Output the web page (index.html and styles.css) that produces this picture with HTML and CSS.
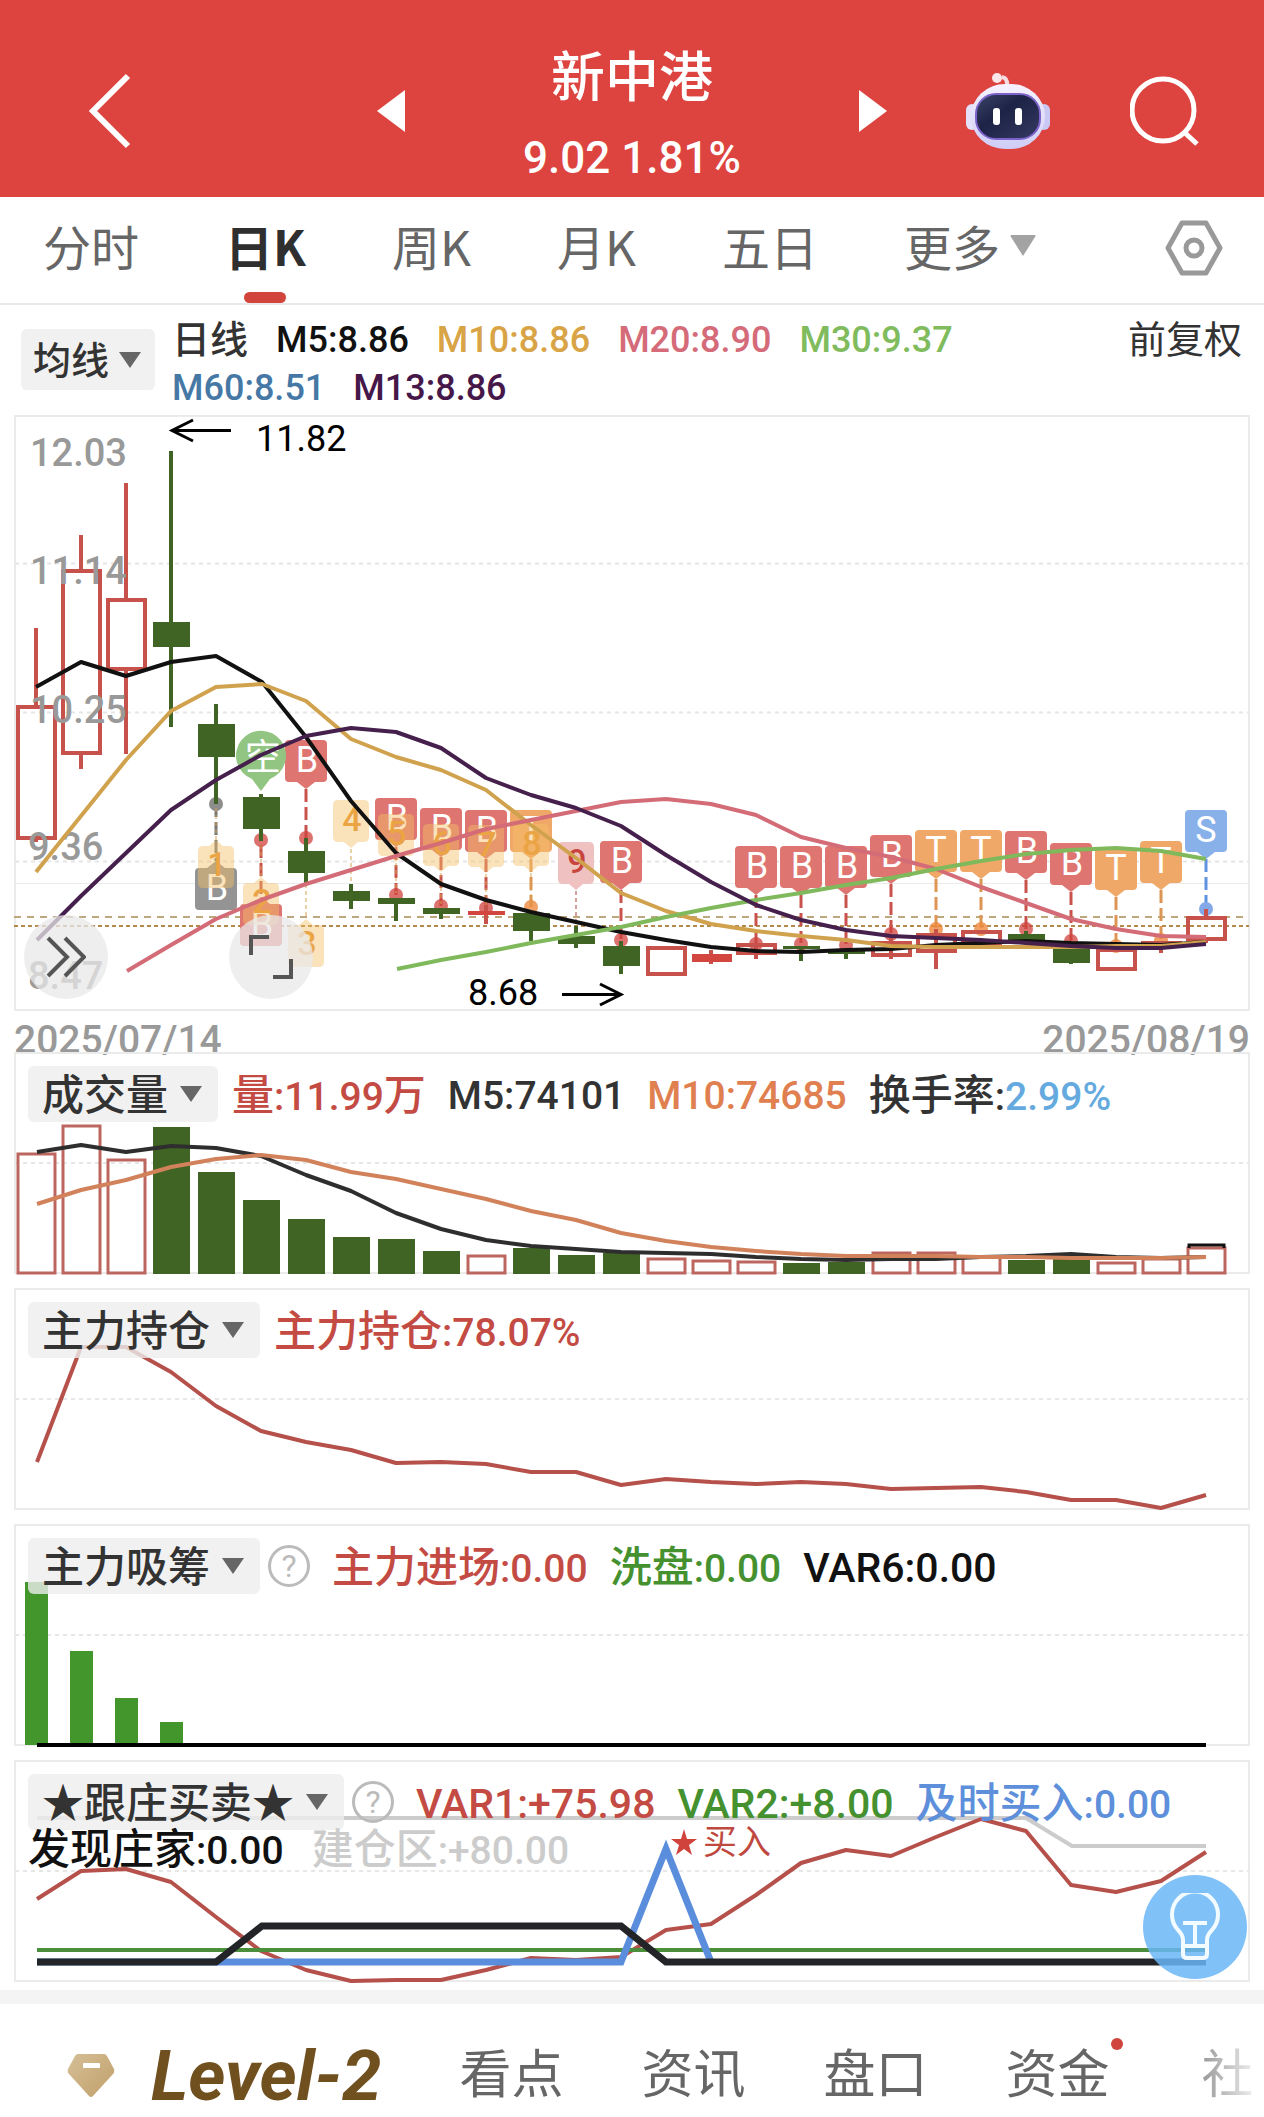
FILE: index.html
```html
<!DOCTYPE html>
<html lang="zh-CN">
<head>
<meta charset="utf-8">
<meta name="viewport" content="width=device-width, initial-scale=1">
<title>新中港 日K</title>
<link rel="stylesheet" href="styles.css">
</head>
<body>
<header class="topbar">
  <button class="icon-btn back" aria-label="返回"><svg width="44" height="76" viewBox="0 0 44 76"><path d="M40 3L5 38L40 73" fill="none" stroke="#fff" stroke-width="6"/></svg></button>
  <div class="stock">
    <button class="icon-btn" aria-label="上一只"><svg width="28" height="42" viewBox="0 0 28 42"><path d="M28 0V42L0 21Z" fill="#fff"/></svg></button>
    <div class="stock-info">
      <h1>新中港</h1>
      <p>9.02 1.81%</p>
    </div>
    <button class="icon-btn" aria-label="下一只"><svg width="28" height="42" viewBox="0 0 28 42"><path d="M0 0V42L28 21Z" fill="#fff"/></svg></button>
  </div>
  <div class="tools">
    <button class="icon-btn" aria-label="智能助手"><svg width="84" height="78" viewBox="0 0 84 78">
      <defs>
        <linearGradient id="shell" x1="0" y1="0" x2="0" y2="1"><stop offset="0" stop-color="#f6f2ff"/><stop offset="1" stop-color="#cfcdf6"/></linearGradient>
        <linearGradient id="visor" x1="0" y1="0" x2="1" y2="1"><stop offset="0" stop-color="#3c4468"/><stop offset=".4" stop-color="#1c2346"/><stop offset="1" stop-color="#353a62"/></linearGradient>
      </defs>
      <path d="M41 14Q42 6 36 5" fill="none" stroke="#f6dce2" stroke-width="4"/>
      <ellipse cx="31" cy="6" rx="5" ry="5" fill="#fbe7ea"/>
      <rect x="0" y="32" width="12" height="26" rx="6" fill="#e4e0fb"/>
      <rect x="72" y="32" width="12" height="26" rx="6" fill="#c9c8f4"/>
      <rect x="5" y="12" width="74" height="65" rx="34" fill="url(#shell)"/>
      <rect x="10" y="22" width="64" height="45" rx="20" fill="url(#visor)" stroke="#7b63c9" stroke-width="2"/>
      <rect x="27" y="36" width="7" height="17" rx="3" fill="#fff"/>
      <rect x="49" y="36" width="7" height="17" rx="3" fill="#fff"/>
    </svg></button>
    <button class="icon-btn" aria-label="搜索"><svg width="70" height="70" viewBox="0 0 70 70" fill="none" stroke="#fff" stroke-width="5"><circle cx="33" cy="34" r="31"/><path d="M54 56L67 68"/></svg></button>
  </div>
</header>

<nav class="periods">
  <a href="#">分时</a>
  <a href="#" class="active">日K</a>
  <a href="#">周K</a>
  <a href="#">月K</a>
  <a href="#">五日</a>
  <a href="#" class="more">更多<svg width="26" height="21" viewBox="0 0 26 21"><path d="M1 0H25Q26 1 25 2L13 21L1 2Q0 1 1 0Z" fill="#a3a3a3"/></svg></a>
  <button class="icon-btn settings" aria-label="设置"><svg width="58" height="56" viewBox="0 0 58 56" fill="none" stroke="#999" stroke-width="5" stroke-linejoin="round"><path d="M17 3H41L55 28L41 53H17L3 28Z"/><circle cx="29" cy="28" r="8"/></svg></button>
</nav>

<section class="legend">
  <button class="picker picker-small">均线<svg width="22" height="16" viewBox="0 0 22 16"><path d="M0 0H22L11 16Z" fill="#666"/></svg></button>
  <div class="ma-rows">
    <div class="ma-row"><span class="cn">日线</span><span class="c-m5">M5:8.86</span><span class="c-m10">M10:8.86</span><span class="c-m20">M20:8.90</span><span class="c-m30">M30:9.37</span></div>
    <div class="ma-row"><span class="c-m60">M60:8.51</span><span class="c-m13">M13:8.86</span></div>
  </div>
  <button class="adjust">前复权</button>
</section>

<main class="charts">
  <section class="panel price">
    <svg class="plot" viewBox="14 415 1236 596" role="img" aria-label="日K线图">
      <defs>
        <path id="pin" d="M-17 0H17Q21 0 21 4V38Q21 42 17 42H9L0 49L-9 42H-17Q-21 42 -21 38V4Q-21 0 -17 0Z"/>
        <path id="pin-up" d="M0 -7L9 0H17Q21 0 21 4V38Q21 42 17 42H-17Q-21 42 -21 38V4Q-21 0 -17 0H-9Z"/>
        <path id="tag" d="M-13 0H13Q18 0 18 5V37Q18 42 13 42H7L0 48L-7 42H-13Q-18 42 -18 37V5Q-18 0 -13 0Z"/>
        <path id="tag-up" d="M0 -6L7 0H13Q18 0 18 5V37Q18 42 13 42H-13Q-18 42 -18 37V5Q-18 0 -13 0H-7Z"/>
      </defs>
      <rect class="frame" x="15" y="416" width="1234" height="594"/>
      <path class="grid" d="M15 563.5H1249M15 712.5H1249M15 861.5H1249"/>
      <path d="M15 883.5H1249" stroke="#ebebeb"/>
      <path d="M14 917H1249" stroke="#bda77c" stroke-width="2" stroke-dasharray="7 6"/>
      <path d="M14 926H1249" stroke="#b5884e" stroke-width="2" stroke-dasharray="4 3"/>

      <g fill="#de7570">
        <use href="#pin-up" x="261" y="904"/>
        <use href="#pin" x="306" y="740"/><use href="#pin" x="396" y="798"/><use href="#pin" x="441" y="808"/><use href="#pin" x="486" y="810"/>
        <use href="#pin" x="621" y="841"/><use href="#pin" x="756" y="846"/><use href="#pin" x="801" y="846"/><use href="#pin" x="846" y="846"/>
        <use href="#pin" x="891" y="835"/><use href="#pin" x="1026" y="831"/><use href="#pin" x="1071" y="843"/>
      </g>
      <g fill="#f0a868">
        <use href="#pin" x="531" y="810"/><use href="#pin" x="936" y="830"/><use href="#pin" x="981" y="830"/><use href="#pin" x="1116" y="848"/><use href="#pin" x="1161" y="841"/>
      </g>
      <use href="#pin" x="1206" y="810" fill="#88b1ea"/>
      <use href="#pin-up" x="216" y="868" fill="#949494"/>
      <path d="M261 791L252 779A25 25 0 1 1 270 779Z" fill="#92c581"/>
      <g class="pin-text">
        <text x="217" y="900">B</text><text x="262" y="937">B</text><text x="307" y="772">B</text><text x="397" y="830">B</text><text x="442" y="840">B</text><text x="487" y="842">B</text><text x="531" y="842">T</text>
        <text x="622" y="873">B</text><text x="757" y="878">B</text><text x="802" y="878">B</text><text x="847" y="878">B</text><text x="892" y="867">B</text><text x="936" y="862">T</text><text x="981" y="862">T</text>
        <text x="1027" y="863">B</text><text x="1072" y="875">B</text><text x="1116" y="880">T</text><text x="1161" y="873">T</text><text x="1206" y="842">S</text>
        <text x="263" y="770">空</text>
      </g>
      <g class="stem">
        <path d="M306 789V838M396 847V895M441 857V906M486 859V908M261 845V897M621 890V940M756 895V943M801 895V943M846 895V945M891 884V934M1026 880V929M1071 892V941" stroke="#c9534c"/>
        <path d="M531 859V907M936 879V929M981 879V929M1116 897V944M1161 890V940" stroke="#dd9555"/>
        <path d="M1206 859V909" stroke="#5f93e0"/>
        <path d="M216 804V861" stroke="#777"/>
      </g>
      <g fill="#d0423c" fill-opacity=".75">
        <circle cx="306" cy="838" r="7"/><circle cx="261" cy="840" r="7"/><circle cx="396" cy="895" r="7"/><circle cx="441" cy="906" r="7"/><circle cx="486" cy="908" r="7"/><circle cx="621" cy="940" r="7"/><circle cx="756" cy="944" r="7"/><circle cx="801" cy="944" r="7"/><circle cx="846" cy="945" r="7"/><circle cx="891" cy="934" r="7"/><circle cx="1026" cy="929" r="7"/><circle cx="1071" cy="941" r="7"/>
      </g>
      <g fill="#ec8a3c" fill-opacity=".8">
        <circle cx="531" cy="907" r="7"/><circle cx="936" cy="929" r="7"/><circle cx="981" cy="929" r="7"/><circle cx="1116" cy="946" r="7"/><circle cx="1161" cy="940" r="7"/>
      </g>
      <circle cx="1206" cy="909" r="7" fill="#84a9e8"/><circle cx="216" cy="804" r="7" fill="#8d8d8d"/>

      <g fill="#f5bf67" fill-opacity=".45">
        <use href="#tag-up" x="216" y="846"/><use href="#tag-up" x="261" y="883"/><use href="#tag-up" x="306" y="925"/>
        <use href="#tag" x="351" y="800"/><use href="#tag" x="396" y="814"/><use href="#tag" x="441" y="824"/><use href="#tag" x="486" y="825"/><use href="#tag" x="531" y="824"/>
      </g>
      <use href="#tag" x="576" y="842" fill="#efc1c1"/>
      <g class="tag-text">
        <text x="217" y="876">1</text><text x="262" y="913">2</text><text x="307" y="955">3</text><text x="352" y="831">4</text><text x="397" y="845">5</text><text x="442" y="855">6</text><text x="487" y="856">7</text><text x="532" y="855">8</text>
        <text x="577" y="873" fill="#c8443c">9</text>
      </g>
      <path d="M216 808V840M261 845V877M306 884V918M351 849V884M396 863V893M441 873V904M486 874V905M531 873V905" stroke="#d3a24f" stroke-dasharray="4 3"/>
      <path d="M576 891V926" stroke="#ab423b" stroke-dasharray="4 3"/>

      <g class="candle-down">
        <path d="M171 451V727M216 704V804M261 794V841M306 838V883M351 884V909M396 898V921M441 908V919M531 913V941M576 926V948M621 941V974M801 946V961M846 951V959M1026 931V940M1071 948V964" stroke-width="4"/>
        <path d="M153 622h37v25h-37zM198 724h37v33h-37zM243 797h37v32h-37zM288 851h37v22h-37zM333 891h37v10h-37zM378 898h37v6h-37zM423 908h37v6h-37zM513 913h37v18h-37zM558 936h37v8h-37zM603 946h37v20h-37zM783 946h37v3h-37zM828 951h37v3h-37zM1008 934h37v8h-37zM1053 946h37v17h-37z" stroke="none"/>
      </g>
      <g class="candle-up">
        <path d="M36 628V707M36 838V842M81 535V571M81 753V769M126 483V600M126 669V754M486 905V924M756 945V959M891 934V959M936 929V969M1161 942V953M1206 909V918M1206 939V943M711 950V964"/>
        <path d="M18 707h37v131h-37zM63 571h37v182h-37zM108 600h37v69h-37zM648 948h37v26h-37zM738 945h37v8h-37zM873 943h37v12h-37zM918 935h37v16h-37zM963 932h37v11h-37zM1098 950h37v19h-37zM1143 943h37v3h-37zM1188 918h37v21h-37z"/>
        <path d="M468 911h37v4h-37zM692 954h40v8h-40z" fill="#d2463f" stroke="none"/>
      </g>

      <g class="axis">
        <text x="30" y="466">12.03</text><text x="30" y="584">11.14</text><text x="30" y="723">10.25</text><text x="28" y="860">9.36</text><text x="28" y="989">8.47</text>
      </g>

      <g class="ma">
        <polyline stroke="#111" points="36,687 81,662 126,676 171,662 216,656 262,682 306,737 351,801 396,853 441,884 486,900 531,912 576,922 621,932 666,940 711,947 756,951 801,952 846,950 891,949 936,945 981,943 1026,941 1071,943 1116,944 1161,945 1206,942"/>
        <polyline stroke="#d0a24e" points="36,872 81,816 126,760 171,711 216,687 262,684 306,701 351,739 396,757 441,770 486,790 531,825 576,858 621,893 666,911 711,924 756,931 801,936 846,940 891,946 936,947 981,947 1026,947 1071,947 1116,946 1161,946 1206,942"/>
        <polyline stroke="#d36c77" points="127,971 171,945 216,919 261,900 306,884 351,870 396,856 441,843 486,829 531,820 576,811 621,802 666,799 711,804 756,815 801,837 846,848 891,857 936,869 981,887 1026,903 1071,919 1116,929 1161,936 1206,937"/>
        <polyline stroke="#7fb95c" points="397,969 441,960 486,952 531,943 576,935 621,927 666,917 711,908 756,900 801,893 846,885 891,878 936,869 981,861 1026,854 1071,850 1116,848 1161,851 1206,859"/>
        <polyline stroke="#46204c" points="37,940 81,896 126,853 171,810 216,780 261,755 306,736 351,728 396,732 441,748 486,778 531,795 576,808 621,826 666,855 711,882 756,905 801,920 846,930 891,936 936,938 981,940 1026,943 1071,946 1116,948 1161,948 1206,944"/>
      </g>

      <g class="extreme">
        <path d="M231 430.500H172M193 420L172 430.500L193 441M562 994.500H621M600 984L621 994.500L600 1005"/>
        <text x="256" y="451">11.82</text><text x="468" y="1005">8.68</text>
      </g>
    </svg>
    <div class="floaters">
      <button class="round" aria-label="展开"><svg width="40" height="42" viewBox="0 0 40 42" fill="none" stroke="#555" stroke-width="4"><path d="M2 2L21 21L2 40M19 2L38 21L19 40"/></svg></button>
      <button class="round" aria-label="全屏"><svg width="44" height="44" viewBox="0 0 44 44" fill="none" stroke="#555" stroke-width="4"><path d="M2 20V2H20M42 24V42H24"/></svg></button>
    </div>
  </section>

  <div class="dates"><time>2025/07/14</time><time>2025/08/19</time></div>

  <section class="panel">
    <svg class="plot" viewBox="14 1052 1236 222" role="img" aria-label="成交量">
      <rect class="frame" x="15" y="1053" width="1234" height="220"/>
      <path class="grid" d="M15 1163H1249"/>
      <path fill="#406423" d="M153 1127h37v147h-37zM198 1172h37v102h-37zM243 1200h37v74h-37zM288 1219h37v55h-37zM333 1237h37v37h-37zM378 1239h37v35h-37zM423 1251h37v23h-37zM513 1248h37v26h-37zM558 1255h37v19h-37zM603 1253h37v21h-37zM783 1263h37v11h-37zM828 1262h37v12h-37zM1008 1260h37v14h-37zM1053 1259h37v15h-37z"/>
      <path fill="none" stroke="#bd6660" stroke-width="3" d="M18 1154h37v119h-37zM63 1126h37v147h-37zM108 1160h37v113h-37zM468 1256h37v17h-37zM648 1259h37v14h-37zM693 1261h37v12h-37zM738 1262h37v11h-37zM873 1253h37v20h-37zM918 1253h37v20h-37zM963 1257h37v16h-37zM1098 1263h37v10h-37zM1143 1259h37v14h-37zM1188 1248h37v25h-37z"/>
      <path d="M1189 1248V1245H1224V1248" fill="none" stroke="#111" stroke-width="3"/>
      <g class="ma">
        <polyline stroke="#2e2e2e" points="37,1152 81,1145 126,1152 171,1146 216,1148 261,1156 306,1175 351,1191 396,1213 441,1229 486,1240 531,1246 576,1249 621,1252 666,1253 711,1254 756,1257 801,1259 846,1260 891,1259 936,1259 981,1257 1026,1256 1071,1254 1116,1257 1161,1258 1206,1257"/>
        <polyline stroke="#d2825a" points="37,1204 81,1190 126,1180 171,1167 216,1159 261,1155 306,1160 351,1172 396,1179 441,1189 486,1199 531,1211 576,1220 621,1233 666,1241 711,1247 756,1251 801,1254 846,1256 891,1256 936,1256 981,1257 1026,1257 1071,1258 1116,1258 1161,1258 1206,1257"/>
      </g>
    </svg>
    <div class="readout">
      <div class="row"><button class="picker">成交量<svg width="22" height="16" viewBox="0 0 22 16"><path d="M0 0H22L11 16Z" fill="#666"/></svg></button>
      <span class="c-red"><b>量</b>:11.99<b>万</b></span><span class="c-dark">M5:74101</span><span class="c-orange">M10:74685</span><span class="c-dark"><b>换手率</b>:<span class="c-sky">2.99%</span></span></div>
    </div>
  </section>

  <section class="panel">
    <svg class="plot" viewBox="14 1288 1236 222" role="img" aria-label="主力持仓">
      <rect class="frame" x="15" y="1289" width="1234" height="220"/>
      <path class="grid" d="M15 1399H1249"/>
      <g class="ma"><polyline stroke="#b5504a" points="37,1462 81,1347 126,1347 171,1372 216,1406 261,1431 306,1442 351,1450 396,1463 441,1462 486,1464 531,1472 576,1472 621,1485 666,1479 711,1482 756,1484 801,1482 846,1484 891,1489 936,1488 981,1487 1026,1492 1071,1500 1116,1500 1161,1508 1206,1495"/></g>
    </svg>
    <div class="readout">
      <div class="row"><button class="picker">主力持仓<svg width="22" height="16" viewBox="0 0 22 16"><path d="M0 0H22L11 16Z" fill="#666"/></svg></button>
      <span class="c-red"><b>主力持仓</b>:78.07%</span></div>
    </div>
  </section>

  <section class="panel">
    <svg class="plot" viewBox="14 1524 1236 222" role="img" aria-label="主力吸筹">
      <rect class="frame" x="15" y="1525" width="1234" height="220"/>
      <path class="grid" d="M15 1635H1249"/>
      <path fill="#43962b" d="M25 1582h23v163h-23zM70 1651h23v94h-23zM115 1698h23v47h-23zM160 1722h23v23h-23z"/>
      <path d="M37 1745H1206" stroke="#000" stroke-width="4"/>
    </svg>
    <div class="readout">
      <div class="row"><button class="picker">主力吸筹<svg width="22" height="16" viewBox="0 0 22 16"><path d="M0 0H22L11 16Z" fill="#666"/></svg></button>
      <button class="help" aria-label="说明">?</button>
      <span class="c-red"><b>主力进场</b>:0.00</span><span class="c-green"><b>洗盘</b>:0.00</span><span class="c-black var">VAR6:0.00</span></div>
    </div>
  </section>

  <section class="panel">
    <svg class="plot" viewBox="14 1760 1236 222" role="img" aria-label="跟庄买卖">
      <rect class="frame" x="15" y="1761" width="1234" height="220"/>
      <path class="grid" d="M15 1871H1249"/>
      <g class="ma">
        <polyline stroke="#ccc" points="37,1818 1026,1818 1072,1846 1206,1846"/>
        <polyline stroke="#b5504a" points="37,1899 81,1871 126,1869 171,1882 216,1917 261,1951 306,1970 351,1981 396,1980 441,1980 486,1970 531,1958 576,1960 621,1957 666,1930 711,1924 756,1895 801,1863 846,1850 891,1856 936,1837 981,1819 1026,1831 1071,1885 1116,1892 1161,1881 1206,1852"/>
        <path stroke="#4b8f3c" d="M37 1950H1206"/>
      </g>
      <g fill="none" stroke-width="7">
        <polyline stroke="#5b8ddd" points="37,1962 621,1962 666,1849 711,1962"/>
        <polyline stroke="#232428" points="37,1962 216,1962 262,1926 621,1926 666,1962 1206,1962"/>
      </g>
      <path d="M684 1829l3 10h10l-8 6 3 10-8-6-8 6 3-10-8-6h10z" fill="#d0433c"/>
      <text class="signal" x="703" y="1854">买入</text>
    </svg>
    <div class="readout">
      <div class="row"><button class="picker">★跟庄买卖★<svg width="22" height="16" viewBox="0 0 22 16"><path d="M0 0H22L11 16Z" fill="#666"/></svg></button>
      <button class="help" aria-label="说明">?</button>
      <span class="c-red var">VAR1:+75.98</span><span class="c-green var">VAR2:+8.00</span><span class="c-blue"><b>及时买入</b>:0.00</span></div>
      <div class="row second"><span class="c-black"><b>发现庄家</b>:0.00</span><span class="c-pale"><b>建仓区</b>:+80.00</span></div>
    </div>
    <button class="tip" aria-label="提示"><svg width="50" height="68" viewBox="0 0 50 68" fill="none" stroke="#f2fbff" stroke-width="4"><path d="M13 47Q13 42 8 37A23 23 0 1 1 42 37Q37 42 37 47V61Q37 65 33 65H17Q13 65 13 61ZM13 53H37M13 30H37M25 30V53"/></svg></button>
  </section>
</main>

<nav class="bottom">
  <a href="#" class="level"><svg width="48" height="43" viewBox="0 0 48 43"><defs><linearGradient id="gem" x1="0" y1="0" x2="1" y2="1"><stop offset="0" stop-color="#d5bf97"/><stop offset="1" stop-color="#c19f69"/></linearGradient></defs><path d="M11 0H37Q39 0 40 2L47 15Q48 18 46 20L26 42Q24 44 22 42L2 20Q0 18 1 15L8 2Q9 0 11 0Z" fill="url(#gem)"/><rect x="16" y="9" width="17" height="5" rx="1" fill="#fff"/></svg>Level-2</a>
  <a href="#">看点</a>
  <a href="#">资讯</a>
  <a href="#">盘口</a>
  <a href="#" class="has-dot">资金</a>
  <a href="#" class="fade">社</a>
</nav>
</body>
</html>
```
FILE: styles.css
```css
* {
  box-sizing: border-box;
}

body {
  margin: 0;
  background: #fff;
  color: #333;
  font-family: Roboto, "Noto Sans CJK SC", sans-serif;
  overflow-x: hidden;
}

button {
  margin: 0;
  padding: 0;
  border: 0;
  background: none;
  color: inherit;
  font: inherit;
}

a {
  color: inherit;
  text-decoration: none;
}

svg {
  display: block;
}

b {
  font-weight: 500;
  font-size: 42px;
}

/* title bar */
.topbar {
  display: grid;
  grid-template-columns: 1fr auto 1fr;
  align-items: center;
  height: 197px;
  padding: 25px 64px 0 88px;
  background: #dd4440;
  color: #fff;
}

.stock {
  display: flex;
  align-items: center;
  justify-content: space-between;
  width: 510px;
  margin-right: 24px;
}

.stock-info {
  padding-top: 14px;
  text-align: center;
  font-weight: 500;
}

.stock-info h1 {
  margin: 0;
  font-size: 54px;
  line-height: 80px;
  font-weight: 500;
}

.stock-info p {
  margin: 0;
  font-size: 44px;
  line-height: 78px;
}

.tools {
  display: flex;
  align-items: center;
  justify-content: flex-end;
  gap: 80px;
}

/* period tabs */
.periods {
  display: flex;
  align-items: center;
  gap: 86px;
  height: 108px;
  padding: 0 41px 4px 43px;
  border-bottom: 2px solid #e9e9e9;
  color: #666;
  font-family: "Noto Sans CJK SC", sans-serif;
  font-size: 48px;
  line-height: 90px;
}

.periods a {
  padding-bottom: 6px;
}

.active {
  position: relative;
  color: #2f2f2f;
  font-weight: 700;
}

.active::after {
  content: "";
  position: absolute;
  left: 50%;
  bottom: -7px;
  width: 42px;
  height: 11px;
  margin-left: -21px;
  border-radius: 6px;
  background: #d2453c;
}

.more {
  display: flex;
  align-items: center;
  gap: 10px;
}

.settings {
  margin-left: auto;
}

/* moving average legend */
.legend {
  display: flex;
  align-items: flex-start;
  height: 110px;
  padding: 11px 22px 0 21px;
  font-size: 36px;
}

.picker {
  display: flex;
  align-items: center;
  gap: 12px;
  height: 56px;
  padding: 3px 16px 0 14px;
  border-radius: 6px;
  background: rgba(238, 238, 238, 0.8);
  color: #333;
  font-size: 42px;
  font-weight: 500;
  line-height: 53px;
}

.picker svg {
  margin-top: -3px;
}

.picker-small {
  gap: 10px;
  height: 61px;
  margin-top: 13px;
  padding: 3px 14px 0 12px;
  font-size: 38px;
}

.ma-rows {
  flex: 1;
  padding-left: 17px;
  font-weight: 500;
}

.ma-row {
  display: flex;
  gap: 28px;
  line-height: 48px;
}

.cn,
.adjust {
  font-size: 38px;
}

.adjust {
  line-height: 48px;
}

/* charts */
.charts {
  padding: 0 14px 8px;
  border-bottom: 14px solid #f4f4f4;
}

.panel {
  display: grid;
  position: relative;
  margin-bottom: 14px;
}

.panel:last-child,
.price {
  margin-bottom: 0;
}

.plot {
  grid-area: 1 / 1;
  width: 100%;
  height: auto;
  overflow: visible;
}

.frame {
  fill: none;
  stroke: #ebebeb;
  stroke-width: 2;
}

.grid {
  stroke: #e6e6e6;
  stroke-width: 2;
  stroke-dasharray: 4 4;
}

.ma {
  fill: none;
  stroke-width: 4;
  stroke-linejoin: round;
}

.stem {
  stroke-width: 3;
  stroke-dasharray: 13 5;
}

.pin-text {
  fill: #fff;
  font-size: 36px;
  text-anchor: middle;
}

.tag-text {
  fill: #eba444;
  font-size: 34px;
  font-weight: 500;
  text-anchor: middle;
}

.candle-down {
  fill: #406423;
  stroke: #406423;
}

.candle-up {
  fill: none;
  stroke: #c6524b;
  stroke-width: 4;
}

.axis {
  fill: #999;
  font-size: 38px;
  font-weight: 500;
}

.extreme {
  fill: none;
  stroke: #000;
  stroke-width: 3;
}

.extreme text {
  fill: #000;
  stroke: none;
  font-size: 36px;
}

.signal {
  fill: #c0493f;
  font-size: 34px;
}

.floaters {
  position: absolute;
  left: 10px;
  bottom: 12px;
  display: flex;
  gap: 121px;
}

.round {
  display: flex;
  align-items: center;
  justify-content: center;
  width: 84px;
  height: 84px;
  border-radius: 50%;
  background: rgba(232, 232, 232, 0.75);
}

.dates {
  display: flex;
  justify-content: space-between;
  height: 41px;
  color: #999;
  font-size: 39px;
  font-weight: 500;
  line-height: 58px;
}

.readout {
  grid-area: 1 / 1;
  z-index: 1;
  padding: 14px 14px 0;
  font-size: 39px;
  font-weight: 500;
}

.row {
  display: flex;
  align-items: center;
  gap: 22px;
  height: 56px;
  line-height: 56px;
  white-space: nowrap;
}

.row > span {
  padding-top: 4px;
}

.row .picker {
  margin-right: -8px;
}

.var {
  font-size: 41px;
}

.second {
  gap: 28px;
  height: 36px;
  line-height: 36px;
}

.help {
  width: 42px;
  height: 42px;
  margin-left: -6px;
  border: 3px solid #bbb;
  border-radius: 50%;
  color: #bbb;
  font-size: 32px;
  font-weight: 400;
  line-height: 36px;
}

.tip {
  position: absolute;
  right: 3px;
  bottom: 3px;
  z-index: 2;
  display: flex;
  align-items: center;
  justify-content: center;
  width: 104px;
  height: 104px;
  border-radius: 50%;
  background: rgba(106, 182, 247, 0.85);
}

/* bottom tabs */
.bottom {
  display: flex;
  align-items: center;
  gap: 78px;
  height: 113px;
  padding: 30px 0 0 67px;
  overflow: hidden;
  color: #666;
  font-size: 52px;
  line-height: 80px;
  white-space: nowrap;
}

.level {
  display: flex;
  align-items: center;
  gap: 36px;
  color: #70501f;
  font-size: 71px;
  font-style: italic;
  font-weight: 700;
}

.has-dot {
  position: relative;
}

.has-dot::after {
  content: "";
  position: absolute;
  top: 2px;
  right: -13px;
  width: 12px;
  height: 12px;
  border-radius: 50%;
  background: #cf443c;
}

.fade {
  margin-left: 14px;
  background: linear-gradient(90deg, #999, #eee);
  background-clip: text;
  color: transparent;
}

/* series colours */
.c-m5 { color: #111; }
.c-m10 { color: #d8a446; }
.c-m20 { color: #d56b79; }
.c-m30 { color: #80bb5d; }
.c-m60 { color: #4678a5; }
.c-m13 { color: #46184a; }
.c-red { color: #c34b43; }
.c-dark { color: #333; }
.c-black { color: #111; }
.c-orange { color: #e08050; }
.c-sky { color: #65aadf; }
.c-green { color: #45912f; }
.c-blue { color: #5d8fdb; }
.c-pale { color: #ccc; }
```
